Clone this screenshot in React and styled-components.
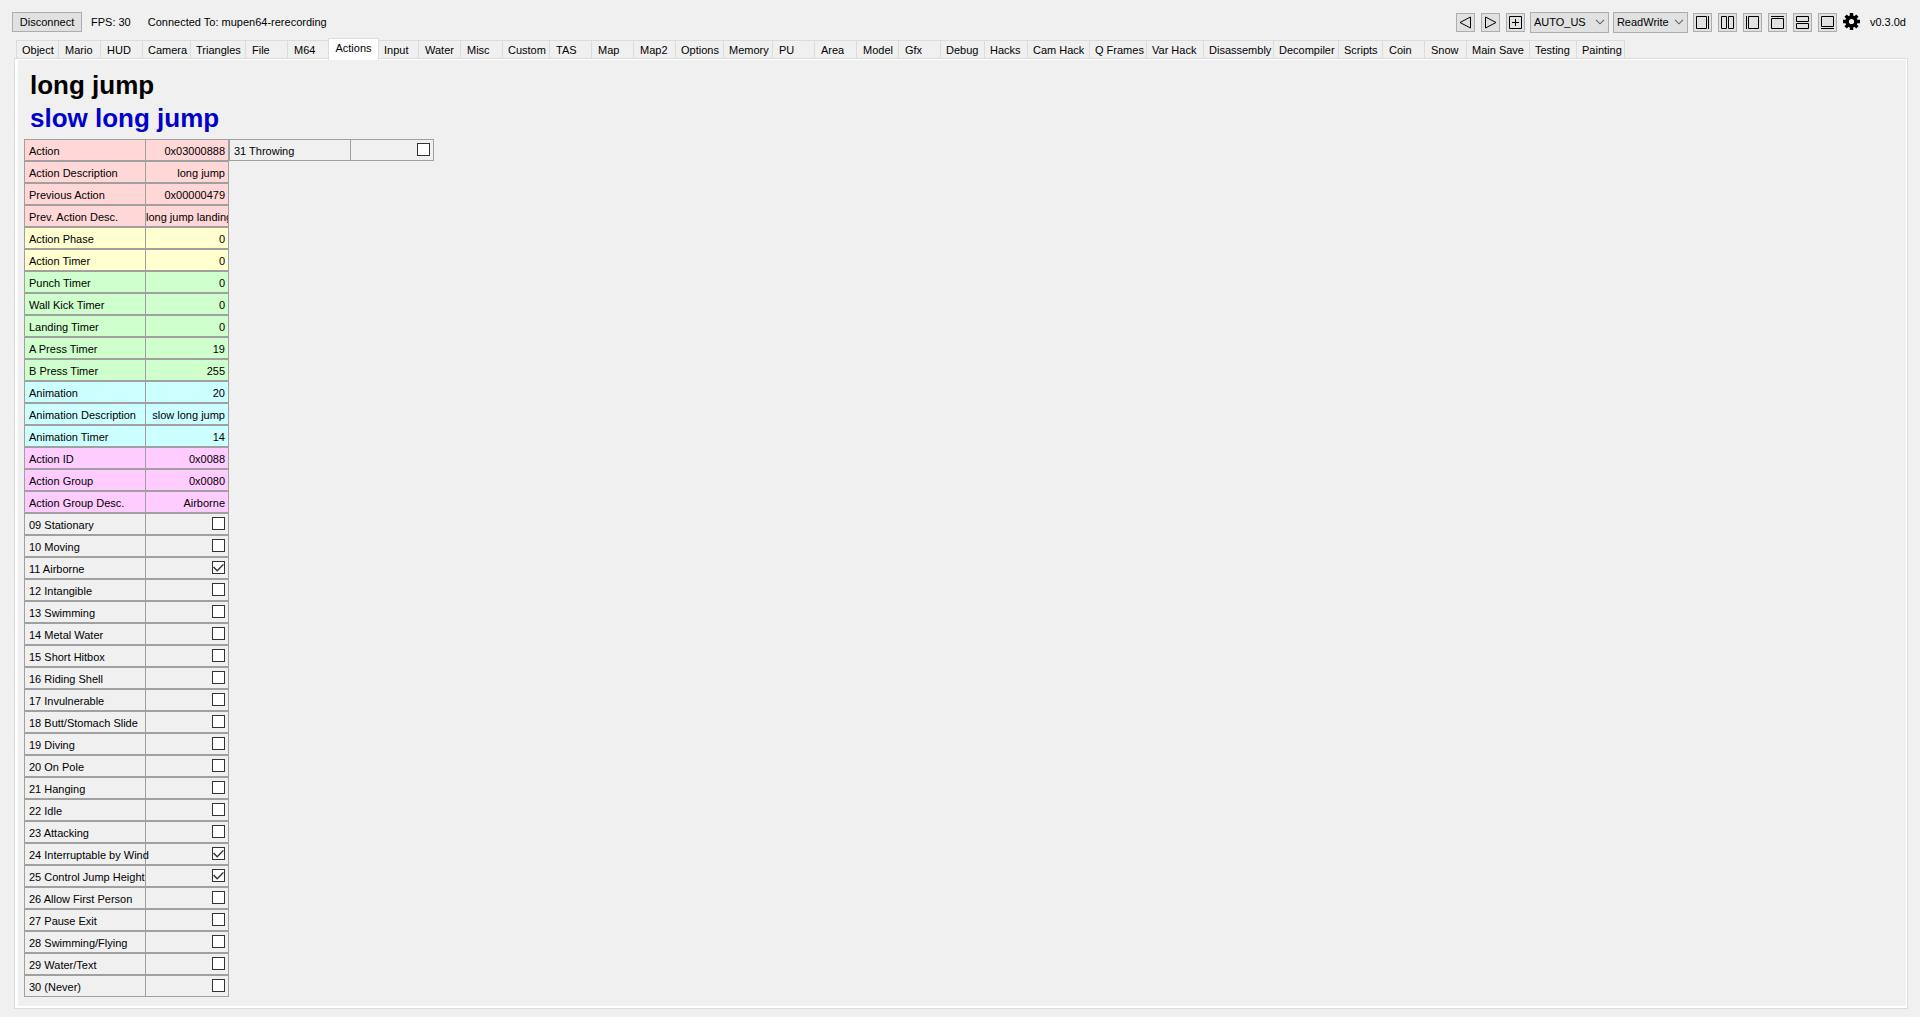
import React, { useState } from "react";
import styled, { createGlobalStyle } from "styled-components";

const GlobalStyle = createGlobalStyle`
  *, *::before, *::after { box-sizing: border-box; }
  body {
    margin: 0;
    background: #f0f0f0;
    color: #000;
    font-family: "Liberation Sans", Arial, sans-serif;
    font-size: 11px;
    line-height: 14px;
  }
  button, select { font: inherit; color: inherit; }
`;

const Window = styled.div`
  display: flex;
  flex-direction: column;
  min-height: 100vh;
  padding: 11px 12px 8px 12px;
`;

const Toolbar = styled.header`
  display: flex;
  align-items: center;
  justify-content: space-between;
  height: 22px;
  padding-right: 2px;
`;

const ToolGroup = styled.div`
  display: flex;
  align-items: center;
  gap: ${(p) => p.$gap}px;
`;

const DisconnectButton = styled.button`
  width: 70px;
  height: 20px;
  padding: 0;
  border: 1px solid #adadad;
  background: #e1e1e1;
  line-height: 18px;
`;

const Status = styled.span`
  white-space: nowrap;
`;

const IconButton = styled.button`
  display: flex;
  width: 19px;
  height: 19px;
  padding: 0;
  border: 1px solid #adadad;
  background: #e1e1e1;
`;

const GearButton = styled(IconButton)`
  justify-content: center;
  border: 0;
  background: none;
`;

const SelectBox = styled.label`
  display: grid;
  align-items: center;
  width: ${(p) => p.$width}px;
  height: 21px;
  border: 1px solid #adadad;
  background: #e1e1e1;

  > * { grid-area: 1 / 1; }
  > svg { justify-self: end; margin-right: 3px; pointer-events: none; }
`;

const Select = styled.select`
  appearance: none;
  width: 100%;
  height: 19px;
  padding: 0 3px;
  border: 0;
  background: transparent;
`;

const TabList = styled.nav`
  display: flex;
  align-items: flex-end;
  height: 21px;
  margin-top: 4px;
  padding-left: 4px;
`;

const Tab = styled.button`
  flex: none;
  width: ${(p) => p.$width}px;
  height: 18px;
  padding: 1px 0 0 ${(p) => (p.$width > 42 ? 5 : 6)}px;
  border: 1px solid #dcdcdc;
  border-width: 1px 0 0 1px;
  background: #f0f0f0;
  line-height: 16px;
  text-align: left;
  white-space: nowrap;

  &:first-child { padding-left: 5px; }
  &:last-child { border-right-width: 1px; }

  &[aria-selected="true"] {
    height: 22px;
    margin-bottom: -2px;
    padding: 0 0 4px;
    border-right-width: 1px;
    background: #fff;
    text-align: center;
    z-index: 1;
  }
  &[aria-selected="true"] + & {
    padding-left: 5px;
    border-left-width: 0;
  }
`;

const Page = styled.main`
  flex: 1;
  margin: 0 0 0 2px;
  border: 1px solid #dcdcdc;
  background: #fff;
  padding: 1px 1px 2px 3px;
  display: flex;
`;

const PageBody = styled.div`
  flex: 1;
  padding: 9px 6px;
  background: #f0f0f0;
`;

const Title = styled.h1`
  margin: 0;
  padding-left: 6px;
  font-size: 26px;
  line-height: 33px;
  font-weight: bold;
  color: ${(p) => p.$color};
`;

const Columns = styled.div`
  display: flex;
  align-items: flex-start;
  margin-top: 4px;
`;

const Table = styled.table`
  width: 205px;
  table-layout: fixed;
  border-collapse: separate;
  border-spacing: 0;
`;

const Row = styled.tr`
  height: 22px;
  background: ${(p) => p.$tint};
`;

const NameCell = styled.th`
  width: 121px;
  height: 22px;
  padding: 2px 0 0 4px;
  border: 1px solid #a0a0a0;
  border-right: 0;
  font-weight: normal;
  text-align: left;
  white-space: nowrap;
`;

const ValueCell = styled.td`
  height: 22px;
  padding: 0;
  border: 1px solid #a0a0a0;
`;

const Value = styled.span`
  display: block;
  padding: 2px 3px 0 0;
  overflow: hidden;
  text-align: right;
  white-space: nowrap;
`;

const Check = styled.input`
  appearance: none;
  display: block;
  width: 13px;
  height: 13px;
  margin: 0 3px 1px auto;
  border: 1px solid #333;
  background: #fff;

  &:checked::before {
    content: "";
    display: block;
    width: 11px;
    height: 11px;
    background: #333;
    clip-path: polygon(0 50%, 10% 42%, 38% 70%, 90% 18%, 100% 26%, 38% 88%);
  }
`;

const tabs = [
  ["Object", 42], ["Mario", 42], ["HUD", 42], ["Camera", 48], ["Triangles", 55],
  ["File", 42], ["M64", 41], ["Actions", 51], ["Input", 39], ["Water", 42],
  ["Misc", 42], ["Custom", 47], ["TAS", 42], ["Map", 42], ["Map2", 42],
  ["Options", 48], ["Memory", 49], ["PU", 42], ["Area", 42], ["Model", 42],
  ["Gfx", 42], ["Debug", 44], ["Hacks", 43], ["Cam Hack", 62], ["Q Frames", 57],
  ["Var Hack", 57], ["Disassembly", 70], ["Decompiler", 65], ["Scripts", 44],
  ["Coin", 42], ["Snow", 42], ["Main Save", 63], ["Testing", 47], ["Painting", 49],
];

const red = "#ffd7d7";
const yellow = "#ffffd0";
const green = "#cfffcc";
const cyan = "#ccffff";
const pink = "#ffccff";

const variables = [
  ["Action", "0x03000888", red],
  ["Action Description", "long jump", red],
  ["Previous Action", "0x00000479", red],
  ["Prev. Action Desc.", "long jump landing", red],
  ["Action Phase", "0", yellow],
  ["Action Timer", "0", yellow],
  ["Punch Timer", "0", green],
  ["Wall Kick Timer", "0", green],
  ["Landing Timer", "0", green],
  ["A Press Timer", "19", green],
  ["B Press Timer", "255", green],
  ["Animation", "20", cyan],
  ["Animation Description", "slow long jump", cyan],
  ["Animation Timer", "14", cyan],
  ["Action ID", "0x0088", pink],
  ["Action Group", "0x0080", pink],
  ["Action Group Desc.", "Airborne", pink],
  ["09 Stationary", false],
  ["10 Moving", false],
  ["11 Airborne", true],
  ["12 Intangible", false],
  ["13 Swimming", false],
  ["14 Metal Water", false],
  ["15 Short Hitbox", false],
  ["16 Riding Shell", false],
  ["17 Invulnerable", false],
  ["18 Butt/Stomach Slide", false],
  ["19 Diving", false],
  ["20 On Pole", false],
  ["21 Hanging", false],
  ["22 Idle", false],
  ["23 Attacking", false],
  ["24 Interruptable by Wind", true],
  ["25 Control Jump Height", true],
  ["26 Allow First Person", false],
  ["27 Pause Exit", false],
  ["28 Swimming/Flying", false],
  ["29 Water/Text", false],
  ["30 (Never)", false],
];
const overflowVariables = [["31 Throwing", false]];

const Glyph = ({ children }) => (
  <svg width="17" height="17" viewBox="0 0 17 17" fill="none" stroke="#000" aria-hidden="true">
    {children}
  </svg>
);

const navIcons = [
  ["Previous tab", <path d="M13.5 3v11L3 8.5z" />],
  ["Next tab", <path d="M3.5 3v11L14 8.5z" />],
  ["Add tab", <path d="M2.5 2.5h12v12h-12zM8.5 5v7M5 8.5h7" />],
];

const layoutIcons = [
  ["Show left pane", <path d="M2.5 2.5h10v12h-10zM14.5 2v13" />],
  ["Split vertically", <path d="M2.5 2.5h5v12h-5zM9.5 2.5h5v12h-5z" />],
  ["Show right pane", <path d="M4.5 2.5h10v12h-10zM2.5 2v13" />],
  ["Show bottom pane", <path d="M2.5 4.5h12v10h-12zM2 2.5h13" />],
  ["Split horizontally", <path d="M2.5 2.5h12v5h-12zM2.5 9.5h12v5h-12z" />],
  ["Show top pane", <path d="M2.5 2.5h12v10h-12zM2 14.5h13" />],
];

const Gear = () => (
  <svg width="17" height="17" viewBox="0 0 17 17" aria-hidden="true">
    <g stroke="#000" strokeWidth="3.4">
      <path d="M8.5 0v17M0 8.5h17M2.6 2.6l11.8 11.8M14.4 2.6L2.6 14.4" />
    </g>
    <circle cx="8.5" cy="8.5" r="6.2" fill="#000" />
    <circle cx="8.5" cy="8.5" r="2.6" fill="#f0f0f0" />
  </svg>
);

const Chevron = () => (
  <svg width="10" height="6" viewBox="0 0 10 6" fill="none" stroke="#606060" aria-hidden="true">
    <path d="M1 .8l4 4 4-4" strokeWidth="1.1" />
  </svg>
);

function ComboBox({ label, width, options }) {
  return (
    <SelectBox $width={width}>
      <Select aria-label={label}>
        {options.map((option) => <option key={option}>{option}</option>)}
      </Select>
      <Chevron />
    </SelectBox>
  );
}

function VariableTable({ label, rows }) {
  return (
    <Table aria-label={label}>
      <tbody>
        {rows.map(([name, value, tint], i) => (
          <Row key={name} $tint={tint || "#f0f0f0"}>
            <NameCell scope="row">
              {typeof value === "boolean" ? <label htmlFor={`${label}-${i}`}>{name}</label> : name}
            </NameCell>
            <ValueCell>
              {typeof value === "boolean"
                ? <Check type="checkbox" id={`${label}-${i}`} defaultChecked={value} />
                : <Value>{value}</Value>}
            </ValueCell>
          </Row>
        ))}
      </tbody>
    </Table>
  );
}

export default function App() {
  const [active, setActive] = useState("Actions");
  return (
    <>
      <GlobalStyle />
      <Window>
        <Toolbar>
          <ToolGroup $gap={9}>
            <DisconnectButton>Disconnect</DisconnectButton>
            <ToolGroup $gap={17}>
              <Status>FPS: 30</Status>
              <Status>Connected To: mupen64-rerecording</Status>
            </ToolGroup>
          </ToolGroup>
          <ToolGroup $gap={5}>
            <ToolGroup $gap={6}>
              {navIcons.map(([label, icon]) => (
                <IconButton key={label} aria-label={label}><Glyph>{icon}</Glyph></IconButton>
              ))}
            </ToolGroup>
            <ToolGroup $gap={4}>
              <ComboBox label="ROM version" width={79} options={["AUTO_US", "AUTO_JP"]} />
              <ComboBox label="Access mode" width={75} options={["ReadWrite", "ReadOnly"]} />
            </ToolGroup>
            <ToolGroup $gap={6}>
              {layoutIcons.map(([label, icon]) => (
                <IconButton key={label} aria-label={label}><Glyph>{icon}</Glyph></IconButton>
              ))}
            </ToolGroup>
            <ToolGroup $gap={9}>
              <GearButton aria-label="Settings"><Gear /></GearButton>
              <Status>v0.3.0d</Status>
            </ToolGroup>
          </ToolGroup>
        </Toolbar>
        <TabList role="tablist">
          {tabs.map(([name, width]) => (
            <Tab
              key={name}
              role="tab"
              aria-selected={name === active}
              $width={width}
              onClick={() => setActive(name)}
            >
              {name}
            </Tab>
          ))}
        </TabList>
        <Page>
          <PageBody>
            <Title $color="#000">long jump</Title>
            <Title as="h2" $color="#0000cd">slow long jump</Title>
            <Columns>
              <VariableTable label="variables" rows={variables} />
              <VariableTable label="more-variables" rows={overflowVariables} />
            </Columns>
          </PageBody>
        </Page>
      </Window>
    </>
  );
}
